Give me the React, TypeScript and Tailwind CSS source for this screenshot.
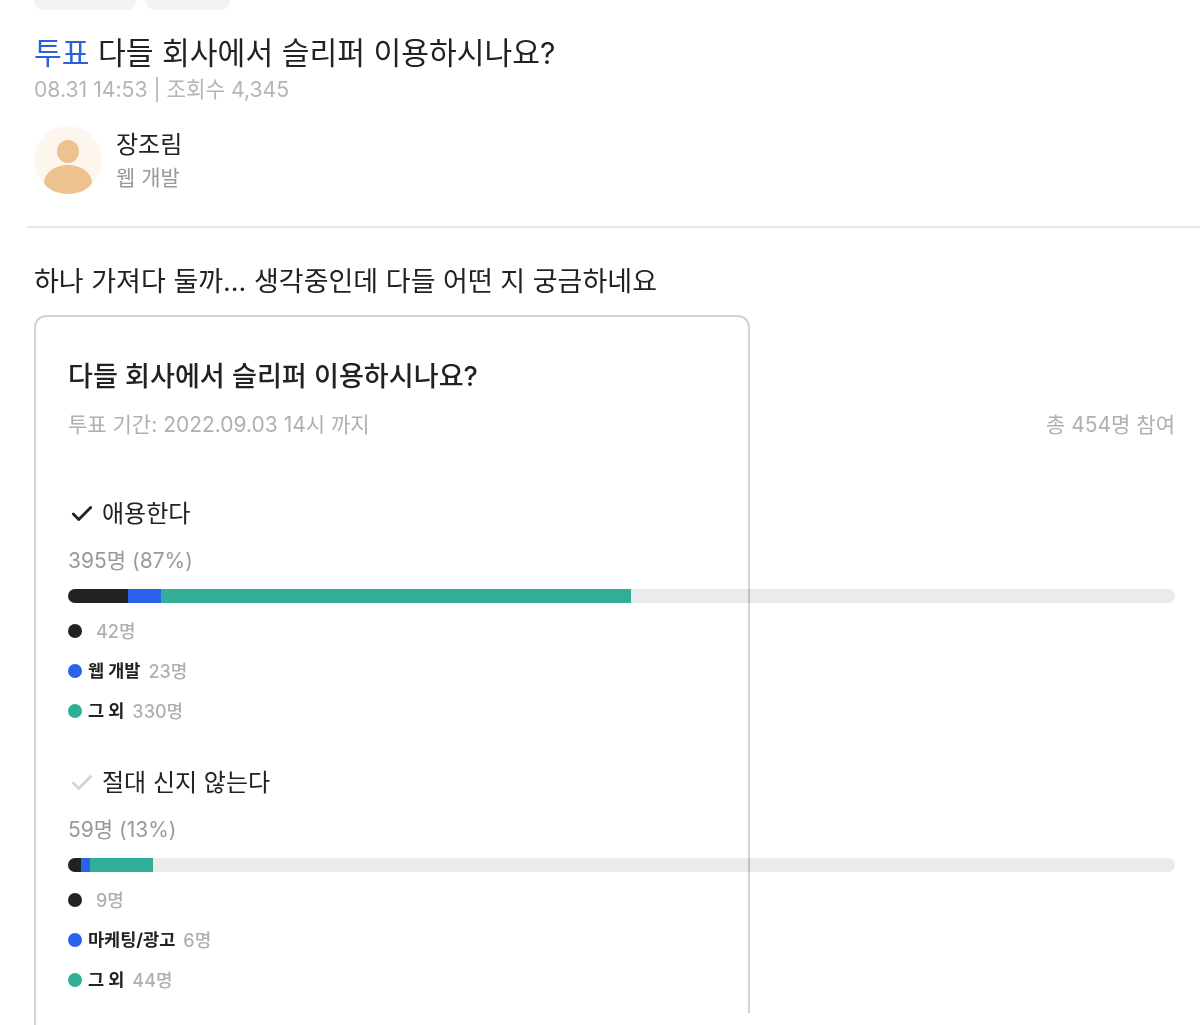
import React from 'react';
import { Check } from 'lucide-react';

const font = "font-['Inter','Noto_Sans_CJK_KR',sans-serif]";

interface Segment {
  label: string;
  count: string;
  color: string;
  width: number;
}

interface Option {
  title: string;
  total: string;
  picked: boolean;
  segments: Segment[];
}

const options: Option[] = [
  {
    title: '애용한다',
    total: '395명 (87%)',
    picked: true,
    segments: [
      { label: '', count: '42명', color: 'bg-[#222222]', width: 60 },
      { label: '웹 개발', count: '23명', color: 'bg-[#2b62ec]', width: 33 },
      { label: '그 외', count: '330명', color: 'bg-[#30ae97]', width: 470 },
    ],
  },
  {
    title: '절대 신지 않는다',
    total: '59명 (13%)',
    picked: false,
    segments: [
      { label: '', count: '9명', color: 'bg-[#222222]', width: 13 },
      { label: '마케팅/광고', count: '6명', color: 'bg-[#2b62ec]', width: 9 },
      { label: '그 외', count: '44명', color: 'bg-[#30ae97]', width: 63 },
    ],
  },
];

function PollOption({ option }: { option: Option }) {
  return (
    <div className="mb-[39px]">
      <div className="flex h-[36px] items-center gap-[7px]">
        <Check
          className={`ml-px h-[26px] w-[26px] ${option.picked ? 'text-[#222222]' : 'text-[#d4d4d4]'}`}
          strokeWidth={2.6}
        />
        <span className="text-[24px] leading-[36px] text-[#222222]">{option.title}</span>
      </div>
      <div className="mt-[11px] text-[21px] leading-[36px] text-[#999999]">{option.total}</div>
      {/* multiply so the card's right border still shows through the track */}
      <div className="mt-[10px] flex h-[14px] overflow-hidden rounded-full bg-[#ebebeb] mix-blend-multiply">
        {option.segments.map((s, i) => (
          <div key={i} className={`h-full ${s.color}`} style={{ width: s.width }} />
        ))}
      </div>
      <div className="mt-[13px] flex flex-col gap-[10px]">
        {option.segments.map((s, i) => (
          <div key={i} className="flex h-[30px] items-center">
            <span className={`h-[14px] w-[14px] rounded-full ${s.color}`} />
            {s.label && <span className="ml-[6px] text-[17.5px] font-bold text-[#222222]">{s.label}</span>}
            <span className="ml-[8px] text-[18px] font-medium text-[#b0b0b0]">
              {!s.label && <span className="ml-[6px]" />}
              {s.count}
            </span>
          </div>
        ))}
      </div>
    </div>
  );
}

export default function App() {
  return (
    <div className={`h-[1025px] w-[1200px] overflow-hidden bg-white ${font}`}>
      <div className="px-[34px]">
        <div className="-mt-[24px] flex gap-[8px]">
          <div className="h-[34px] w-[103px] rounded-[10px] bg-[#f3f3f3]" />
          <div className="h-[34px] w-[85px] rounded-[10px] bg-[#f3f3f3]" />
        </div>
        <h1 className="mt-[21px] text-[30.2px] font-normal leading-[44px] text-[#222222]">
          <span className="text-[#2b62d9]">투표</span> 다들 회사에서 슬리퍼 이용하시나요?
        </h1>
        <div className="-mt-[2px] text-[21.2px] leading-[32px] text-[#b5b5b5]">08.31 14:53 | 조회수 4,345</div>
        <div className="mt-[21px] flex items-center gap-[14px]">
          <svg width="68" height="68" viewBox="0 0 68 68" className="shrink-0">
            <circle cx="34" cy="34" r="34" fill="#fdf6ef" />
            <ellipse cx="34" cy="25.5" rx="11" ry="11.5" fill="#eec28e" />
            <path d="M10 57 C10 47 21 39 34 39 C47 39 58 47 58 57 C54 64 44 68 34 68 C24 68 14 64 10 57 Z" fill="#eec28e" />
          </svg>
          <div className="flex flex-col">
            <span className="text-[24px] leading-[36px] text-[#222222]">장조림</span>
            <span className="text-[21px] leading-[30px] text-[#999999]">웹 개발</span>
          </div>
        </div>
      </div>
      <div className="ml-[27px] mt-[32px] h-[2px] bg-[#e8e8e8]" />
      <div className="mx-[34px] mt-[33px] text-[27px] leading-[42px] text-[#222222]">
        하나 가져다 둘까... 생각중인데 다들 어떤 지 궁금하네요
      </div>
      <div className="relative ml-[34px] mt-[12px] h-[740px] w-[716px] rounded-[12px] border-2 border-[#d2d2d2] pl-[32px] pt-[38px]">
        <div className="pointer-events-none absolute -right-[2px] top-[696px] h-[30px] w-[2px] bg-white" />
        <div className="w-[1107px]">
          <div className="text-[27.1px] font-medium leading-[44px] text-[#222222]">다들 회사에서 슬리퍼 이용하시나요?</div>
          <div className="mt-[8px] flex justify-between text-[21px] leading-[36px] text-[#b0b0b0]">
            <span>투표 기간: 2022.09.03 14시 까지</span>
            <span>총 454명 참여</span>
          </div>
          <div className="mt-[53px]">
            {options.map((option) => (
              <PollOption key={option.title} option={option} />
            ))}
          </div>
        </div>
      </div>
    </div>
  );
}
